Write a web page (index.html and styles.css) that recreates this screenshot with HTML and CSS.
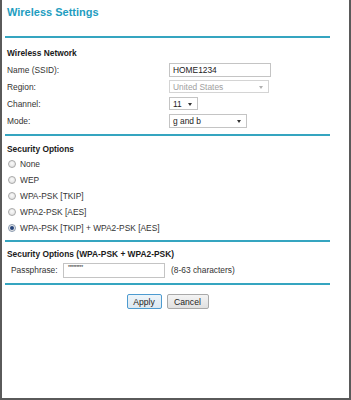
FILE: index.html
```html
<!DOCTYPE html>
<html>
<head>
<meta charset="utf-8">
<link rel="stylesheet" href="styles.css">
</head>
<body>
<div class="page">
  <h1 class="title">Wireless Settings</h1>
  <div class="rule"></div>

  <h2 class="head head-1">Wireless Network</h2>
  <div class="rows">
    <div class="row">
      <span class="label">Name (SSID):</span>
      <span class="field text-field name-field">HOME1234</span>
    </div>
    <div class="row">
      <span class="label">Region:</span>
      <span class="field select disabled region-field">United States<span class="arrow"></span></span>
    </div>
    <div class="row">
      <span class="label">Channel:</span>
      <span class="field select channel-field">11<span class="arrow"></span></span>
    </div>
    <div class="row">
      <span class="label">Mode:</span>
      <span class="field select mode-field">g and b<span class="arrow"></span></span>
    </div>
  </div>
  <div class="rule rule-2"></div>

  <h2 class="head head-2">Security Options</h2>
  <div class="radios">
    <div class="radio-row"><span class="radio"></span>None</div>
    <div class="radio-row"><span class="radio"></span>WEP</div>
    <div class="radio-row"><span class="radio"></span>WPA-PSK [TKIP]</div>
    <div class="radio-row"><span class="radio"></span>WPA2-PSK [AES]</div>
    <div class="radio-row"><span class="radio checked"></span>WPA-PSK [TKIP] + WPA2-PSK [AES]</div>
  </div>
  <div class="rule rule-3"></div>

  <h2 class="head head-3">Security Options (WPA-PSK + WPA2-PSK)</h2>
  <div class="pass-row">
    <span class="pass-label">Passphrase:</span>
    <span class="field pass-field">*********</span>
    <span class="hint">(8-63 characters)</span>
  </div>
  <div class="rule rule-4"></div>

  <div class="buttons">
    <span class="btn btn-apply">Apply</span>
    <span class="btn btn-cancel">Cancel</span>
  </div>
</div>
</body>
</html>
```

FILE: styles.css
```css
html, body {
  margin: 0;
  padding: 0;
  background: #fff;
}

.page {
  box-sizing: border-box;
  width: 351px;
  height: 400px;
  border-left: 2px solid #5a5a5a;
  border-right: 2px solid #5a5a5a;
  border-bottom: 2px solid #5a5a5a;
  padding: 0 19px 0 3px;
  font-family: "Liberation Sans", Arial, sans-serif;
  font-size: 8.4px;
  color: #333;
  overflow: hidden;
}

.title {
  margin: 0;
  padding: 5px 0 0 2px;
  height: 31px;
  line-height: 14px;
  font-size: 11px;
  font-weight: bold;
  color: #1e9dc0;
}

.rule {
  height: 2px;
  background: #35a5c0;
}

.head {
  margin: 0;
  padding-left: 2px;
  height: 14px;
  line-height: 14px;
  font-size: 8.4px;
  font-weight: bold;
  color: #1a1a1a;
}

.head-1 { padding-top: 8px; }
.head-2 { padding-top: 6px; }
.head-3 { padding-top: 5px; }

.rows {
  padding-top: 1px;
}

.row {
  display: grid;
  grid-template-columns: 164px auto;
  align-items: center;
  height: 17px;
}

.label {
  padding-left: 2px;
}

.field {
  box-sizing: border-box;
  display: flex;
  align-items: center;
  border: 1px solid #c4c4c4;
  background: #fff;
  color: #222;
  padding: 0 3px;
  position: relative;
}

.text-field {
  width: 102px;
  height: 14px;
}

.select {
  height: 13px;
}

.region-field {
  width: 100px;
  color: #a0a0a0;
  border-color: #d4d4d4;
}

.channel-field {
  width: 29px;
}

.mode-field {
  width: 78px;
  height: 14px;
}

.arrow {
  position: absolute;
  right: 5px;
  top: 50%;
  margin-top: -1px;
  width: 0;
  height: 0;
  border-left: 2.5px solid transparent;
  border-right: 2.5px solid transparent;
  border-top: 3px solid #333;
}

.disabled .arrow {
  border-top-color: #b0b0b0;
}

.rule-2 { margin-top: 5px; }

.radios {
  display: flex;
  flex-direction: column;
}

.radio-row {
  display: flex;
  align-items: center;
  height: 16px;
  padding-left: 3px;
  color: #333;
}

.radio {
  box-sizing: border-box;
  width: 8px;
  height: 8px;
  border-radius: 50%;
  border: 1px solid #a8a8a8;
  background: radial-gradient(circle at 50% 40%, #fafafa, #dcdcdc);
  margin-right: 4px;
  display: flex;
  align-items: center;
  justify-content: center;
}

.radio.checked {
  border-color: #8a9bb0;
}

.radio.checked::after {
  content: "";
  width: 4px;
  height: 4px;
  border-radius: 50%;
  background: #24437a;
}

.rule-3 { margin-top: 4px; }

.pass-row {
  display: flex;
  align-items: center;
  height: 18px;
  padding-left: 6px;
}

.pass-label {
  width: 52px;
}

.pass-field {
  width: 102px;
  height: 15px;
  align-items: flex-start;
  font-size: 5px;
  line-height: 7px;
  letter-spacing: -0.3px;
  padding-left: 4px;
  margin-right: 6px;
}

.hint {
  color: #333;
}

.rule-4 { margin-top: 4px; }

.buttons {
  display: flex;
  justify-content: center;
  gap: 5px;
  margin-top: 9px;
}

.btn {
  box-sizing: border-box;
  height: 15px;
  display: flex;
  align-items: center;
  justify-content: center;
  border-radius: 2px;
  background: linear-gradient(#f4f4f4, #e0e0e0);
  color: #222;
  font-size: 8.6px;
}

.btn-apply {
  width: 35px;
  border: 1px solid #4d9bd0;
  background: linear-gradient(#eef5fa, #dce8f1);
}

.btn-cancel {
  width: 42px;
  border: 1px solid #a9a9a9;
}
```
